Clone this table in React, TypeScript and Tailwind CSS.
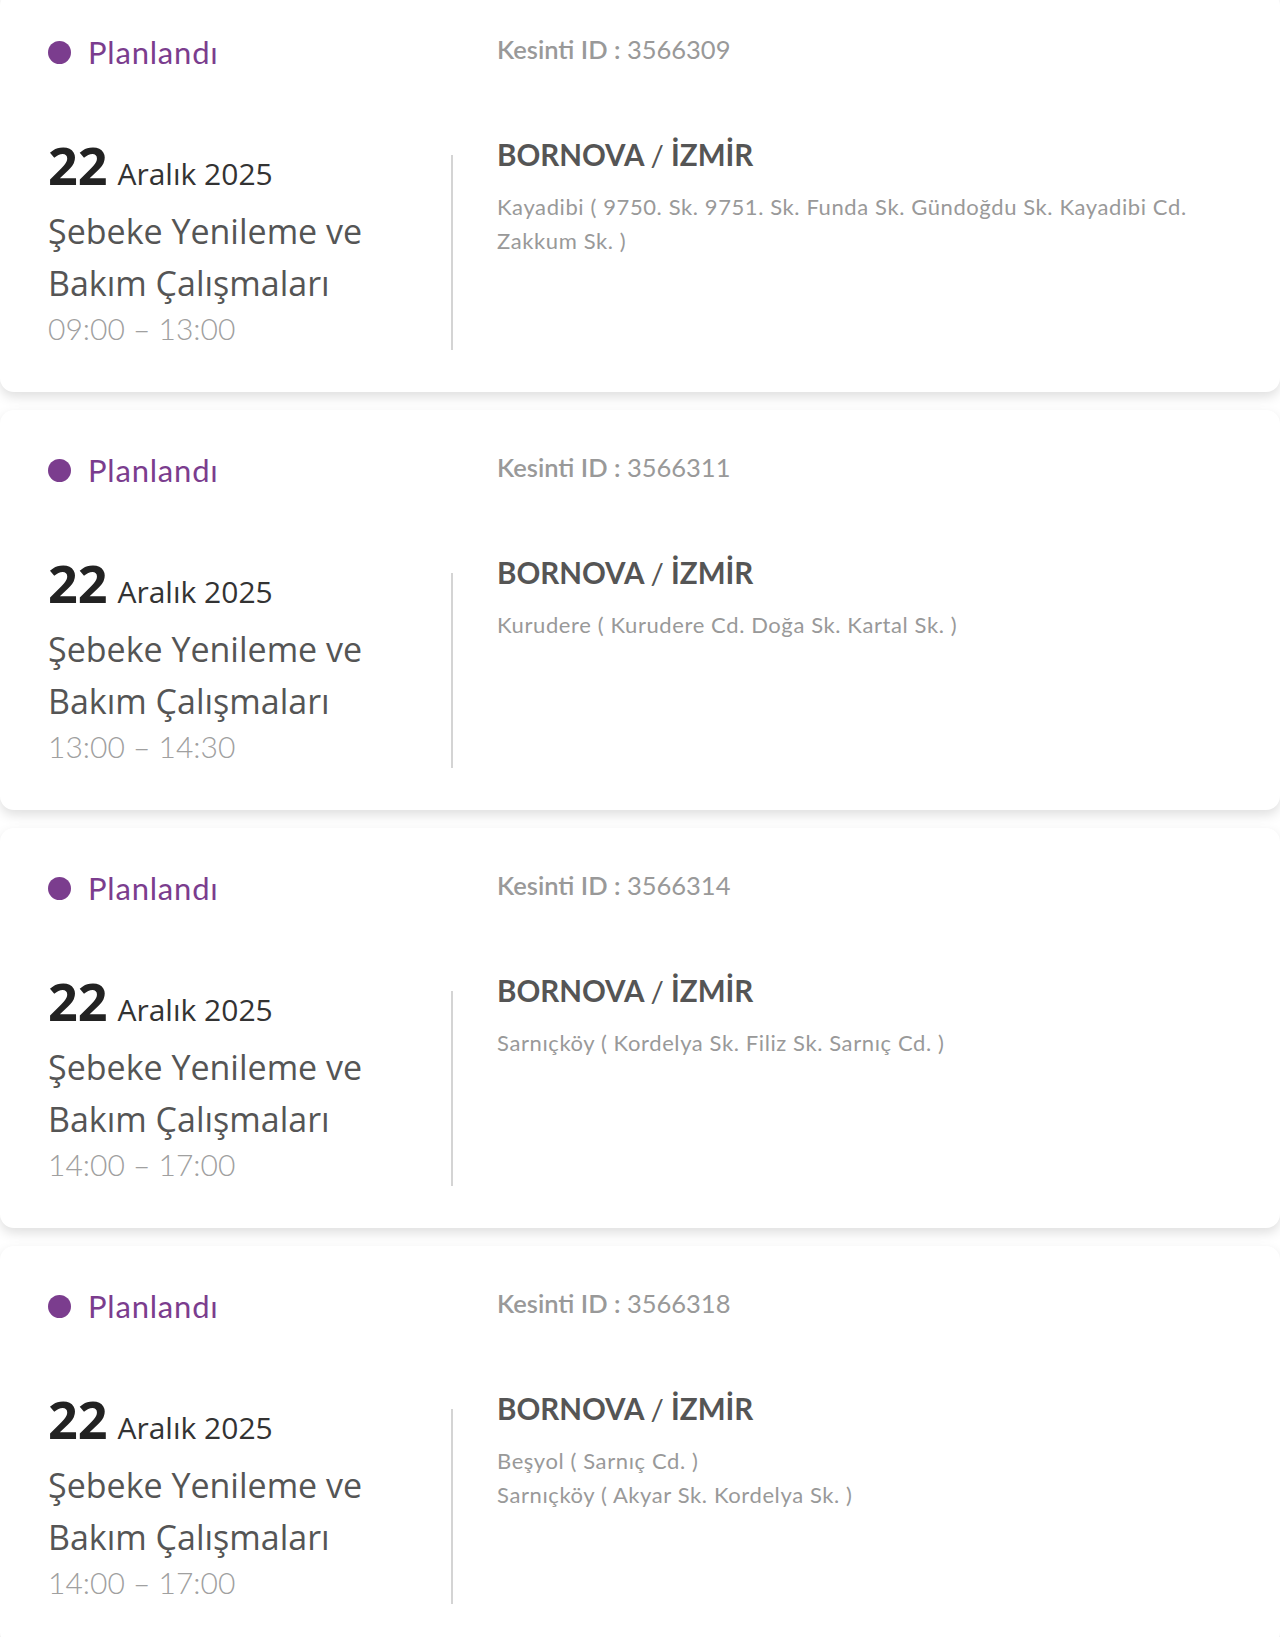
import React from "react";

type Outage = {
  id: string;
  time: string;
  streets: string[];
};

const outages: Outage[] = [
  {
    id: "3566309",
    time: "09:00 – 13:00",
    streets: [
      "Kayadibi ( 9750. Sk. 9751. Sk. Funda Sk. Gündoğdu Sk. Kayadibi Cd. Zakkum Sk. )",
    ],
  },
  {
    id: "3566311",
    time: "13:00 – 14:30",
    streets: ["Kurudere ( Kurudere Cd. Doğa Sk. Kartal Sk. )"],
  },
  {
    id: "3566314",
    time: "14:00 – 17:00",
    streets: ["Sarnıçköy ( Kordelya Sk. Filiz Sk. Sarnıç Cd. )"],
  },
  {
    id: "3566318",
    time: "14:00 – 17:00",
    streets: ["Beşyol ( Sarnıç Cd. )", "Sarnıçköy ( Akyar Sk. Kordelya Sk. )"],
  },
];

const geo = "font-['Lato','Liberation_Sans',sans-serif]";
const human = "font-['Open_Sans','Noto_Sans',sans-serif]";

const OutageCard = ({ item }: { item: Outage }) => (
  <div className="h-[400px] bg-white rounded-[14px] shadow-[0_5px_12px_rgba(0,0,0,0.13)] pl-[48px] pt-[40px]">
    {/* status row */}
    <div className="flex items-start">
      <div className="w-[449px] flex items-center gap-[17px] h-[40px]">
        <span className="w-[23px] h-[23px] rounded-full bg-[#7b3d8e]" />
        <span className={`${geo} text-[31px] leading-[40px] tracking-[0.8px] text-[#7b3d8e]`}>
          Planlandı
        </span>
      </div>
      <div className={`${geo} text-[25.5px] leading-[34px] text-[#999999]`}>
        <span className="font-semibold">Kesinti ID :</span> {item.id}
      </div>
    </div>

    {/* body */}
    <div className="flex mt-[65px]">
      <div className="w-[403px] flex flex-col">
        <div className={`${human} flex items-baseline gap-[10px] leading-[56px]`}>
          <span className="text-[52px] font-bold text-[#222222]">22</span>
          <span className="text-[30px] text-[#333333]">Aralık 2025</span>
        </div>
        <div className={`${human} mt-[3px] text-[34px] leading-[52px] text-[#555555]`}>
          Şebeke Yenileme ve
          <br />
          Bakım Çalışmaları
        </div>
        <div className={`${geo} text-[30px] leading-[38px] text-[#a0a0a0] font-light`}>
          {item.time}
        </div>
      </div>
      <div className="w-[2px] h-[195px] mt-[18px] bg-[#d4d4d4]" />
      <div className="flex-1 pl-[44px] pr-[70px]">
        <div className={`${geo} text-[29.5px] leading-[36px] font-bold text-[#555555]`}>
          BORNOVA <span className="font-normal">/</span> İZMİR
        </div>
        <div className="mt-[17px] flex flex-col">
          {item.streets.map((s, i) => (
            <p
              key={i}
              className={`${geo} text-[22px] leading-[34px] tracking-[0.6px] text-[#999999]`}
            >
              {s}
            </p>
          ))}
        </div>
      </div>
    </div>
  </div>
);

export default function App() {
  return (
    <div className="w-[1280px] h-[1637px] bg-white overflow-hidden">
      <div className="-mt-[8px] flex flex-col gap-[18px]">
        {outages.map((o) => (
          <OutageCard key={o.id} item={o} />
        ))}
      </div>
    </div>
  );
}
